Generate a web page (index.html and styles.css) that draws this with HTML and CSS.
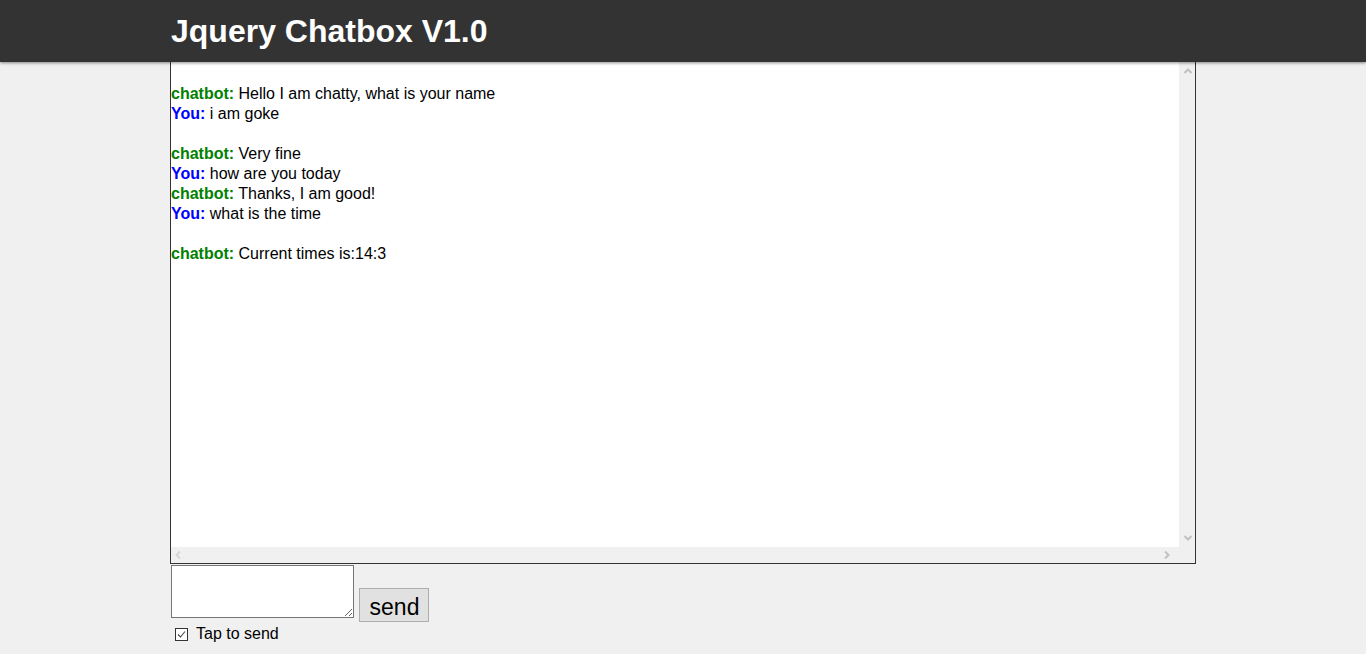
FILE: index.html
```html
<!DOCTYPE html>
<html lang="en">
<head>
<meta charset="utf-8">
<title>Jquery Chatbox V1.0</title>
<link rel="stylesheet" href="styles.css">
</head>
<body>
<header class="topbar">
  <h1 class="title">Jquery Chatbox V1.0</h1>
</header>
<main class="wrap">
  <div class="chatbox">
    <div class="log">
      <div class="line empty"></div>
      <div class="line"><b class="bot">chatbot:</b> Hello I am chatty, what is your name</div>
      <div class="line"><b class="you">You:</b> i am goke</div>
      <div class="line empty"></div>
      <div class="line"><b class="bot">chatbot:</b> Very fine</div>
      <div class="line"><b class="you">You:</b> how are you today</div>
      <div class="line"><b class="bot">chatbot:</b> Thanks, I am good!</div>
      <div class="line"><b class="you">You:</b> what is the time</div>
      <div class="line empty"></div>
      <div class="line"><b class="bot">chatbot:</b> Current times is:14:3</div>
    </div>
    <div class="vbar">
      <svg class="arrow" width="8" height="6" viewBox="0 0 8 6"><path d="M0.5 5 L4 1.5 L7.5 5" fill="none" stroke="#c1c1c1" stroke-width="2"/></svg>
      <svg class="arrow" width="8" height="6" viewBox="0 0 8 6"><path d="M0.5 1 L4 4.5 L7.5 1" fill="none" stroke="#c1c1c1" stroke-width="2"/></svg>
    </div>
    <div class="hbar">
      <svg class="arrow" width="6" height="8" viewBox="0 0 6 8"><path d="M5 0.5 L1.5 4 L5 7.5" fill="none" stroke="#d6d6d6" stroke-width="2"/></svg>
      <svg class="arrow" width="6" height="8" viewBox="0 0 6 8"><path d="M1 0.5 L4.5 4 L1 7.5" fill="none" stroke="#c1c1c1" stroke-width="2"/></svg>
    </div>
    <div class="corner"></div>
  </div>
  <div class="composer">
    <textarea class="input"></textarea>
    <button class="send" type="button">send</button>
  </div>
  <label class="tap">
    <span class="check"><svg width="13" height="13" viewBox="0 0 13 13"><rect x="0.5" y="0.5" width="12" height="12" fill="#fff" stroke="#333"/><path d="M3 6.5 L5.5 9 L10 3.5" fill="none" stroke="#444" stroke-width="1.1"/></svg></span>
    <span>Tap to send</span>
  </label>
</main>
</body>
</html>
```

FILE: styles.css
```css
html, body {
  margin: 0;
  padding: 0;
}
body {
  background: #f0f0f0;
  font-family: "Liberation Sans", Arial, sans-serif;
  font-size: 16px;
  color: #000;
  height: 654px;
  overflow: hidden;
}
.topbar {
  position: relative;
  z-index: 2;
  height: 62px;
  background: #333333;
  box-shadow: 0 1px 3px rgba(0, 0, 0, 0.45);
  padding-left: 171px;
  box-sizing: border-box;
}
.title {
  margin: 0;
  color: #ffffff;
  font-size: 32px;
  font-weight: bold;
  line-height: 62px;
  height: 62px;
}
.wrap {
  margin-left: 170px;
  width: 1026px;
}
.chatbox {
  margin-top: -1px;
  height: 503px;
  box-sizing: border-box;
  border: 1px solid #333;
  display: grid;
  grid-template-columns: 1fr 16px;
  grid-template-rows: 1fr 16px;
  background: #fff;
}
.log {
  overflow: hidden;
  background: #fff;
  padding-top: 2px;
}
.line {
  line-height: 20px;
  height: 20px;
  white-space: nowrap;
}
.bot { color: #008000; }
.you { color: #0000ff; }
.vbar {
  background: #f0f0f0;
  display: flex;
  flex-direction: column;
  justify-content: space-between;
  align-items: center;
  padding: 6px 0 6px 1px;
}
.hbar {
  background: #f0f0f0;
  display: flex;
  justify-content: space-between;
  align-items: center;
  padding: 0 9px 0 4px;
}
.corner {
  background: #f0f0f0;
}
.arrow { display: block; }
.composer {
  display: flex;
  align-items: flex-start;
  margin-top: 1px;
  padding-left: 1px;
}
.input {
  width: 183px;
  height: 53px;
  box-sizing: border-box;
  margin: 0;
  border: 1px solid #767676;
  border-radius: 0;
  background: #fff;
  padding: 2px;
  font-family: "Liberation Sans", Arial, sans-serif;
  resize: both;
}
.send {
  margin: 23px 0 0 5px;
  width: 70px;
  height: 34px;
  box-sizing: border-box;
  background: #e1e1e1;
  border: 1px solid #adadad;
  border-radius: 0;
  font-family: "Liberation Sans", Arial, sans-serif;
  font-size: 23px;
  color: #000;
  padding: 3px 0 0 1px;
  line-height: 30px;
}
.tap {
  display: flex;
  align-items: center;
  gap: 8px;
  margin-top: 2px;
  padding-left: 5px;
  height: 20px;
  line-height: 20px;
}
.check {
  display: block;
  width: 13px;
  height: 13px;
}
.check svg { display: block; }
```
